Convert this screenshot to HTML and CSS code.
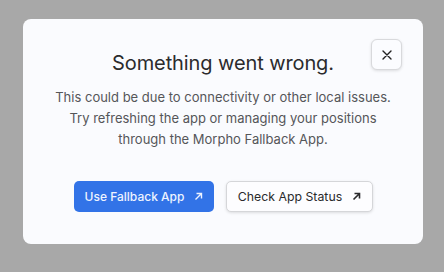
FILE: index.html
```html
<!DOCTYPE html>
<html>
<head>
<meta charset="utf-8">
<link rel="stylesheet" href="styles.css">
</head>
<body>
<div class="overlay">
  <div class="modal">
    <button class="close" aria-label="Close">
      <svg width="10" height="10" viewBox="0 0 10 10"><path d="M1 1L9 9M9 1L1 9" stroke="#222" stroke-width="1.4" stroke-linecap="round"/></svg>
    </button>
    <h1 class="title">Something went wrong.</h1>
    <p class="desc">This could be due to connectivity or other local issues.<br>Try refreshing the app or managing your positions<br>through the Morpho Fallback App.</p>
    <div class="actions">
      <a class="btn btn-primary">Use Fallback App
        <svg width="9" height="9" viewBox="0 0 9 9"><path d="M1.5 7.5L7.5 1.5M2.5 1.5H7.5V6.5" stroke="currentColor" stroke-width="1.4" fill="none"/></svg>
      </a>
      <a class="btn btn-secondary">Check App Status
        <svg width="9" height="9" viewBox="0 0 9 9"><path d="M1.5 7.5L7.5 1.5M2.5 1.5H7.5V6.5" stroke="currentColor" stroke-width="1.6" fill="none"/></svg>
      </a>
    </div>
  </div>
</div>
</body>
</html>
```
FILE: styles.css
```css
* { box-sizing: border-box; }
html, body { margin: 0; padding: 0; }
body {
  width: 444px;
  height: 272px;
  background: #a8a8a8;
  font-family: Inter, "Noto Sans", sans-serif;
  overflow: hidden;
}
.overlay {
  padding: 19px 21px 0 23px;
}
.modal {
  position: relative;
  width: 400px;
  height: 225px;
  background: #fafbfe;
  border-radius: 8px;
  display: flex;
  flex-direction: column;
  align-items: center;
  padding-top: 30px;
}
.close {
  position: absolute;
  top: 20px;
  right: 21px;
  width: 31px;
  height: 31px;
  border: 1px solid #d8d9dc;
  border-radius: 6px;
  background: #fbfcff;
  box-shadow: 0 1px 3px rgba(0,0,0,0.12);
  display: flex;
  align-items: center;
  justify-content: center;
  padding: 0;
}
.title {
  margin: 0;
  font-size: 20px;
  font-weight: 400;
  line-height: 28px;
  color: #2b2b2d;
  letter-spacing: -0.1px;
}
.desc {
  margin: 10px 0 0;
  font-size: 13px;
  line-height: 21px;
  color: #555659;
  text-align: center;
}
.actions {
  display: flex;
  gap: 12px;
  margin-top: 31px;
  margin-left: 1px;
}
.btn {
  display: flex;
  align-items: center;
  justify-content: center;
  gap: 10px;
  height: 31px;
  border-radius: 5px;
  font-size: 12px;
  font-weight: 500;
  padding: 0;
  white-space: nowrap;
}
.btn-primary {
  width: 140px;
  background: #3273e7;
  color: #eef3ff;
}
.btn-secondary {
  width: 147px;
  background: #fdfdff;
  color: #2a2a2c;
  border: 1px solid #d5d6d9;
  box-shadow: 0 1px 3px rgba(0,0,0,0.12);
  font-weight: 400;
  font-size: 12.3px;
}
```
